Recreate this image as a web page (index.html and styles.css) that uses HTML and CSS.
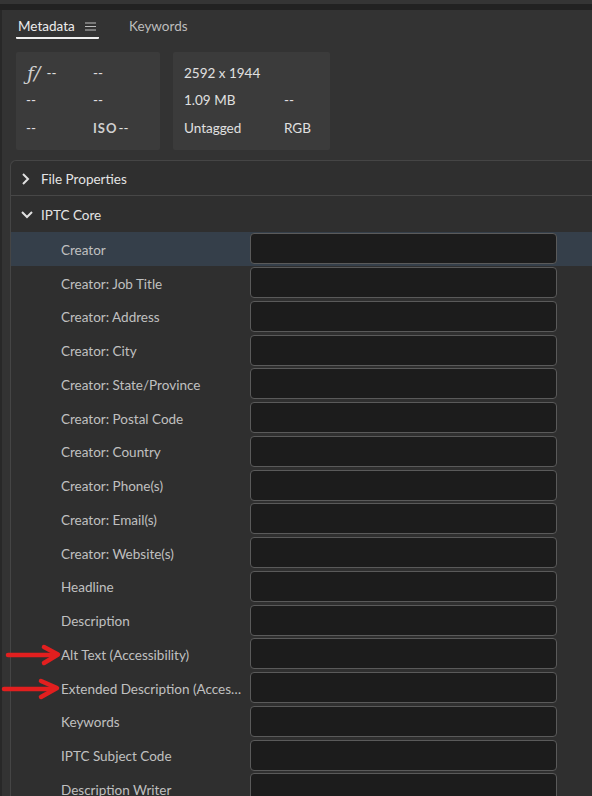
FILE: index.html
```html
<!DOCTYPE html>
<html>
<head>
<meta charset="utf-8">
<link rel="stylesheet" href="styles.css">
</head>
<body>
<div class="topstrip"></div>
<div class="panel">
  <div class="tabs">
    <div class="tab active">Metadata
      <svg class="menu" width="11" height="9" viewBox="0 0 11 9"><path d="M0 1h11M0 4.5h11M0 8h11" stroke="#bdbdbd" stroke-width="1.2"/></svg>
    </div>
    <div class="tab">Keywords</div>
  </div>
  <div class="tiles">
    <div class="tile t1">
      <div class="cell"><span class="fstop">ƒ/</span> --</div><div class="cell">--</div>
      <div class="cell">--</div><div class="cell">--</div>
      <div class="cell">--</div><div class="cell"><span class="iso">ISO</span>--</div>
    </div>
    <div class="tile t2">
      <div class="cell">2592 x 1944</div><div class="cell"></div>
      <div class="cell">1.09 MB</div><div class="cell">--</div>
      <div class="cell">Untagged</div><div class="cell">RGB</div>
    </div>
  </div>
  <div class="section">
    <div class="head">
      <svg class="chev" width="10" height="14" viewBox="0 0 10 14"><path d="M2 2l5 5-5 5" fill="none" stroke="#e0e0e0" stroke-width="2"/></svg>
      <span>File Properties</span>
    </div>
    <div class="head">
      <svg class="chev" width="14" height="10" viewBox="0 0 14 10"><path d="M2 2l5 5 5-5" fill="none" stroke="#e0e0e0" stroke-width="2"/></svg>
      <span>IPTC Core</span>
    </div>
    <div class="rows">
      <div class="row sel"><div class="label">Creator</div><div class="field"></div></div>
      <div class="row"><div class="label">Creator: Job Title</div><div class="field"></div></div>
      <div class="row"><div class="label">Creator: Address</div><div class="field"></div></div>
      <div class="row"><div class="label">Creator: City</div><div class="field"></div></div>
      <div class="row"><div class="label">Creator: State/Province</div><div class="field"></div></div>
      <div class="row"><div class="label">Creator: Postal Code</div><div class="field"></div></div>
      <div class="row"><div class="label">Creator: Country</div><div class="field"></div></div>
      <div class="row"><div class="label">Creator: Phone(s)</div><div class="field"></div></div>
      <div class="row"><div class="label">Creator: Email(s)</div><div class="field"></div></div>
      <div class="row"><div class="label">Creator: Website(s)</div><div class="field"></div></div>
      <div class="row"><div class="label">Headline</div><div class="field"></div></div>
      <div class="row"><div class="label">Description</div><div class="field"></div></div>
      <div class="row"><div class="label">Alt Text (Accessibility)</div><div class="field"></div></div>
      <div class="row"><div class="label">Extended Description (Accessibility)</div><div class="field"></div></div>
      <div class="row"><div class="label">Keywords</div><div class="field"></div></div>
      <div class="row"><div class="label">IPTC Subject Code</div><div class="field"></div></div>
      <div class="row"><div class="label">Description Writer</div><div class="field"></div></div>
    </div>
  </div>
</div>
<svg class="arrows" width="70" height="70" viewBox="0 0 70 70">
  <g fill="none" stroke="#e21f1f" stroke-width="4.5" stroke-linecap="round" stroke-linejoin="round">
    <path d="M8 14 H53"/>
    <path d="M44 6 L58 13.5 L44 22"/>
    <path d="M4 48 H52"/>
    <path d="M41 40 L57 47 L41 56"/>
  </g>
</svg>
</body>
</html>
```

FILE: styles.css
```css
* { box-sizing: border-box; }
html, body { margin: 0; padding: 0; }
body {
  width: 592px;
  height: 796px;
  overflow: hidden;
  background: #282828;
  font-family: "Lato", "Open Sans", sans-serif;
  font-size: 13.5px;
  color: #d6d6d6;
  position: relative;
}
.topstrip {
  height: 10px;
  background: #222;
  border-top: 4px solid #353535;
}
.panel {
  margin-left: 2px;
  background: #333333;
  height: 786px;
  overflow: hidden;
  padding-top: 8px;
}
.tabs {
  display: flex;
  align-items: flex-end;
  padding-left: 14px;
  height: 21px;
}
.tab {
  color: #bdbdbd;
  height: 21px;
  display: flex;
  align-items: flex-start;
  line-height: 16px;
  margin-left: 30px;
}
.tab.active {
  color: #ececec;
  margin-left: 0;
  width: 83px;
  padding-left: 2px;
  border-bottom: 2px solid #f0f0f0;
  border-radius: 1px;
}
.menu { margin-left: 10px; margin-top: 4px; }
.tiles {
  display: flex;
  gap: 13px;
  padding-left: 14px;
  margin-top: 13px;
  height: 98px;
}
.tile {
  background: #3b3b3b;
  border-radius: 2px;
  display: grid;
  grid-auto-rows: 27.5px;
  align-content: center;
  padding-bottom: 2px;
  color: #e0e0e0;
}
.t1 { width: 144px; grid-template-columns: 67px 1fr; padding-left: 10px; }
.t2 { width: 157px; grid-template-columns: 100px 1fr; padding-left: 11px; }
.cell { display: flex; align-items: center; white-space: nowrap; }
.fstop {
  font-family: "DejaVu Serif", serif;
  font-style: italic;
  font-size: 19px;
  font-weight: 300;
  color: #cfcfcf;
  margin-right: 6px;
  margin-left: 1px;
}
.iso {
  font-weight: 700;
  letter-spacing: 1px;
  font-size: 13px;
  color: #d0d0d0;
  margin-right: 1px;
}
.section {
  margin-top: 10px;
  margin-left: 8px;
  width: 620px;
  background: #2f2f2f;
  border-left: 1px solid #454545;
  border-top: 1px solid #454545;
  border-top-left-radius: 6px;
}
.head {
  height: 35px;
  display: flex;
  align-items: center;
  border-bottom: 1px solid #474747;
  color: #e4e4e4;
  position: relative;
  padding-top: 1px;
}
.head span { position: absolute; left: 30px; top: 10px; }
.head .chev { position: absolute; left: 9px; }
.head:first-child .chev { left: 10px; }
.head:nth-child(2) { border-bottom: none; height: 36px; }
.head:nth-child(2) span { top: 11px; }
.row {
  height: 33.75px;
  display: flex;
  align-items: center;
}
.row.sel { background: #353f4a; }
.label {
  width: 189px;
  margin-left: 50px;
  color: #c0c0c0;
  white-space: nowrap;
  overflow: hidden;
  text-overflow: ellipsis;
  padding-right: 4px;
  padding-top: 2px;
}
.field {
  width: 307px;
  height: 31px;
  background: #1c1c1c;
  border: 1px solid #5a5a5a;
  border-radius: 4px;
}
.arrows {
  position: absolute;
  left: 0;
  top: 641px;
}
```
